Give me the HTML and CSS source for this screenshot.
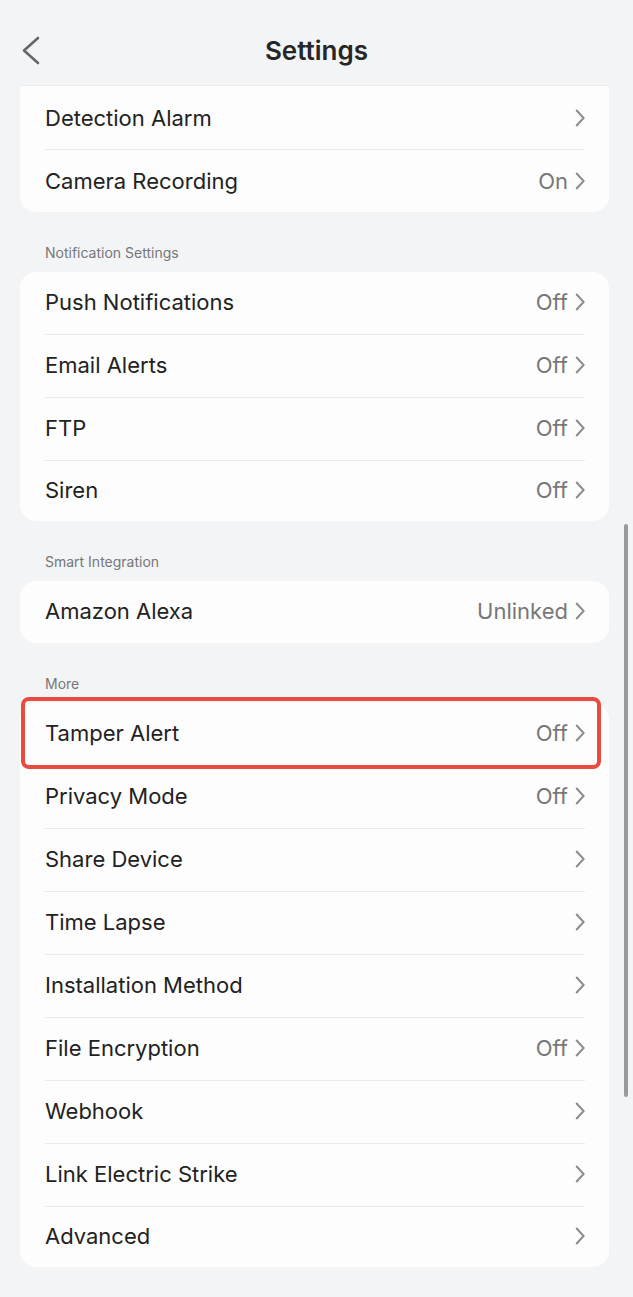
FILE: index.html
```html
<!DOCTYPE html>
<html lang="en">
<head>
    <meta charset="UTF-8">
    <meta name="viewport" content="width=device-width, initial-scale=1.0">
    <title>Settings</title>
    <link rel="stylesheet" href="styles.css">
</head>
<body>
    <header class="top-bar">
        <a class="back-btn" href="#">
            <svg width="20" height="30" viewBox="0 0 20 30"><path d="M17 3 L3 15.5 L17 28" fill="none" stroke="#666" stroke-width="2.6" stroke-linecap="round" stroke-linejoin="round"/></svg>
        </a>
        <h1>Settings</h1>
    </header>

    <main class="settings">
        <div class="card card-cut">
            <div class="row"><span class="name">Detection Alarm</span><span class="value"><i class="chev"></i></span></div>
            <div class="row"><span class="name">Camera Recording</span><span class="value">On<i class="chev"></i></span></div>
        </div>

        <div class="section-label">Notification Settings</div>
        <div class="card">
            <div class="row"><span class="name">Push Notifications</span><span class="value">Off<i class="chev"></i></span></div>
            <div class="row"><span class="name">Email Alerts</span><span class="value">Off<i class="chev"></i></span></div>
            <div class="row"><span class="name">FTP</span><span class="value">Off<i class="chev"></i></span></div>
            <div class="row"><span class="name">Siren</span><span class="value">Off<i class="chev"></i></span></div>
        </div>

        <div class="section-label">Smart Integration</div>
        <div class="card">
            <div class="row"><span class="name">Amazon Alexa</span><span class="value">Unlinked<i class="chev"></i></span></div>
        </div>

        <div class="section-label">More</div>
        <div class="card">
            <div class="highlight"></div>
            <div class="row"><span class="name">Tamper Alert</span><span class="value">Off<i class="chev"></i></span></div>
            <div class="row"><span class="name">Privacy Mode</span><span class="value">Off<i class="chev"></i></span></div>
            <div class="row"><span class="name">Share Device</span><span class="value"><i class="chev"></i></span></div>
            <div class="row"><span class="name">Time Lapse</span><span class="value"><i class="chev"></i></span></div>
            <div class="row"><span class="name">Installation Method</span><span class="value"><i class="chev"></i></span></div>
            <div class="row"><span class="name">File Encryption</span><span class="value">Off<i class="chev"></i></span></div>
            <div class="row"><span class="name">Webhook</span><span class="value"><i class="chev"></i></span></div>
            <div class="row"><span class="name">Link Electric Strike</span><span class="value"><i class="chev"></i></span></div>
            <div class="row"><span class="name">Advanced</span><span class="value"><i class="chev"></i></span></div>
        </div>
    </main>

    <div class="scrollbar"></div>
</body>
</html>
```

FILE: styles.css
```css
body {
    font-family: Inter, "Noto Sans", sans-serif;
    background-color: #f3f4f6;
    margin: 0;
    color: #222;
}
.top-bar {
    height: 86px;
    box-sizing: border-box;
    padding-top: 14px;
    display: flex;
    align-items: center;
    justify-content: center;
    position: relative;
}
.top-bar h1 {
    margin: 0;
    font-size: 26px;
    font-weight: 600;
    color: #262626;
}
.back-btn {
    position: absolute;
    left: 21px;
    top: 35px;
    display: block;
    line-height: 0;
}
.settings {
    padding: 0 24px 30px 20px;
}
.card {
    background-color: #fdfdfd;
    border-radius: 16px;
    position: relative;
}
.card-cut {
    border-radius: 0 0 16px 16px;
    border-top: 1px solid #ececec;
    margin-top: -1px;
}
.row {
    height: 62px;
    margin: 0 24px 0 25px;
    display: flex;
    align-items: center;
    justify-content: space-between;
    border-bottom: 1px solid #ebebeb;
    font-size: 22px;
}
.row > span {
    margin-bottom: 2px;
}
.row:last-child {
    border-bottom: none;
    height: 60px;
}
.row:only-child {
    height: 62px;
}
.card-cut .row > span {
    margin-bottom: 0;
}
.card-cut .row:first-child {
    height: 63px;
}
.card-cut .row:last-child {
    height: 62px;
}
.value {
    color: #777;
    display: flex;
    align-items: center;
}
.chev {
    display: inline-block;
    width: 10px;
    height: 18px;
    margin-left: 7px;
    background: url("data:image/svg+xml,%3Csvg xmlns='http://www.w3.org/2000/svg' width='10' height='18' viewBox='0 0 10 18'%3E%3Cpath d='M1.2 1 L8.6 9 L1.2 17' fill='none' stroke='%238c8c8c' stroke-width='2'/%3E%3C/svg%3E") no-repeat center;
}
.section-label {
    font-size: 14px;
    line-height: 18px;
    color: #777;
    padding-left: 25px;
    margin: 32px 0 10px;
}
.highlight {
    position: absolute;
    left: 1px;
    top: -6px;
    width: 580px;
    height: 72px;
    box-sizing: border-box;
    border: 4px solid #ea4a40;
    border-radius: 8px;
}
.scrollbar {
    position: absolute;
    left: 624px;
    top: 524px;
    width: 4px;
    height: 573px;
    border-radius: 2px;
    background-color: #9a9a9a;
}
```
